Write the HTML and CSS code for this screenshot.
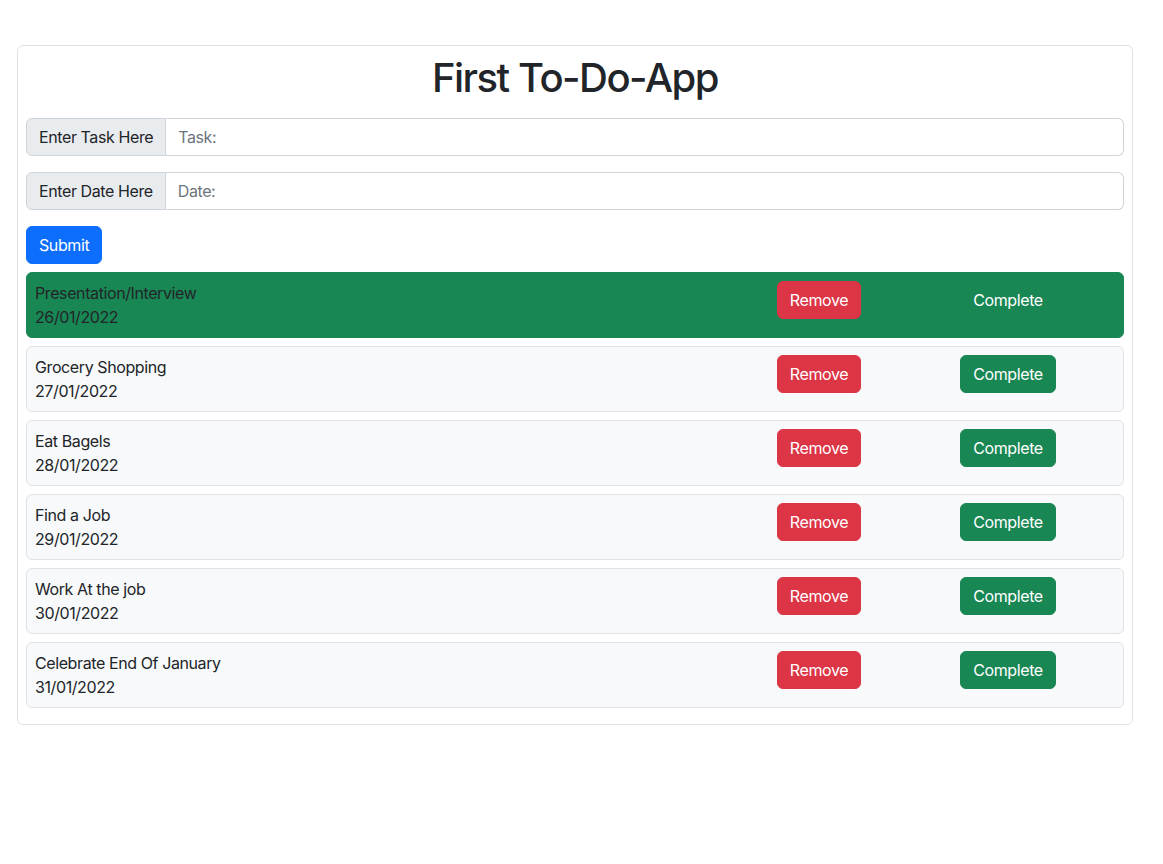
FILE: index.html
```html
<!DOCTYPE html>
<html lang="en">
<head>
<meta charset="utf-8">
<title>First To-Do-App</title>
<link rel="stylesheet" href="styles.css">
</head>
<body>
<div class="page">
  <div class="card">
    <h1 class="title">First To-Do-App</h1>
    <div class="input-group">
      <span class="addon">Enter Task Here</span>
      <input class="field" type="text" placeholder="Task:">
    </div>
    <div class="input-group">
      <span class="addon">Enter Date Here</span>
      <input class="field" type="text" placeholder="Date:">
    </div>
    <button class="btn btn-primary submit">Submit</button>
    <ul class="list">
      <li class="item done">
        <div class="info"><div>Presentation/Interview</div><div>26/01/2022</div></div>
        <div class="cell"><button class="btn btn-danger">Remove</button></div>
        <div class="cell"><button class="btn btn-success">Complete</button></div>
      </li>
      <li class="item">
        <div class="info"><div>Grocery Shopping</div><div>27/01/2022</div></div>
        <div class="cell"><button class="btn btn-danger">Remove</button></div>
        <div class="cell"><button class="btn btn-success">Complete</button></div>
      </li>
      <li class="item">
        <div class="info"><div>Eat Bagels</div><div>28/01/2022</div></div>
        <div class="cell"><button class="btn btn-danger">Remove</button></div>
        <div class="cell"><button class="btn btn-success">Complete</button></div>
      </li>
      <li class="item">
        <div class="info"><div>Find a Job</div><div>29/01/2022</div></div>
        <div class="cell"><button class="btn btn-danger">Remove</button></div>
        <div class="cell"><button class="btn btn-success">Complete</button></div>
      </li>
      <li class="item">
        <div class="info"><div>Work At the job</div><div>30/01/2022</div></div>
        <div class="cell"><button class="btn btn-danger">Remove</button></div>
        <div class="cell"><button class="btn btn-success">Complete</button></div>
      </li>
      <li class="item">
        <div class="info"><div>Celebrate End Of January</div><div>31/01/2022</div></div>
        <div class="cell"><button class="btn btn-danger">Remove</button></div>
        <div class="cell"><button class="btn btn-success">Complete</button></div>
      </li>
    </ul>
  </div>
</div>
</body>
</html>
```
FILE: styles.css
```css
* { box-sizing: border-box; }
html, body { margin: 0; padding: 0; background: #fff; }
body {
  font-family: Inter, "Helvetica Neue", Arial, sans-serif;
  font-size: 16px;
  line-height: 24px;
  letter-spacing: -0.4px;
  color: #212529;
}
.page { padding: 45px 30px 0 17px; }
.card {
  border: 1px solid #dee2e6;
  border-radius: 6px;
  padding: 8px;
}
.title {
  margin: 0 0 16px;
  text-align: center;
  font-size: 40px;
  line-height: 48px;
  font-weight: 500;
  letter-spacing: -1.5px;
}
.input-group {
  display: flex;
  margin-bottom: 16px;
  height: 38px;
}
.addon {
  background: #e9ecef;
  border: 1px solid #ced4da;
  border-radius: 6px 0 0 6px;
  padding: 6px 12px;
  white-space: nowrap;
}
.field {
  flex: 1;
  border: 1px solid #ced4da;
  border-left: 0;
  border-radius: 0 6px 6px 0;
  padding: 6px 12px;
  font: inherit;
  letter-spacing: inherit;
  color: #212529;
  outline: none;
}
.field::placeholder { color: #6c757d; }
.btn {
  font: inherit;
  letter-spacing: inherit;
  height: 38px;
  padding: 6px 12px;
  border: 1px solid transparent;
  border-radius: 6px;
  color: #fff;
  cursor: pointer;
}
.btn-primary { background: #0d6efd; border-color: #0d6efd; }
.btn-danger { background: #dc3545; border-color: #dc3545; }
.btn-success { background: #198754; border-color: #198754; }
.submit { display: block; margin-bottom: 8px; }
.list { list-style: none; margin: 0; padding: 0; }
.item {
  display: grid;
  grid-template-columns: 1fr 164px 214px;
  align-items: start;
  background: #f8f9fa;
  border: 1px solid #dee2e6;
  border-radius: 6px;
  padding: 8px;
  margin-bottom: 8px;
}
.item.done { background: #198754; border-color: #198754; }
.cell { display: flex; justify-content: center; }
```
